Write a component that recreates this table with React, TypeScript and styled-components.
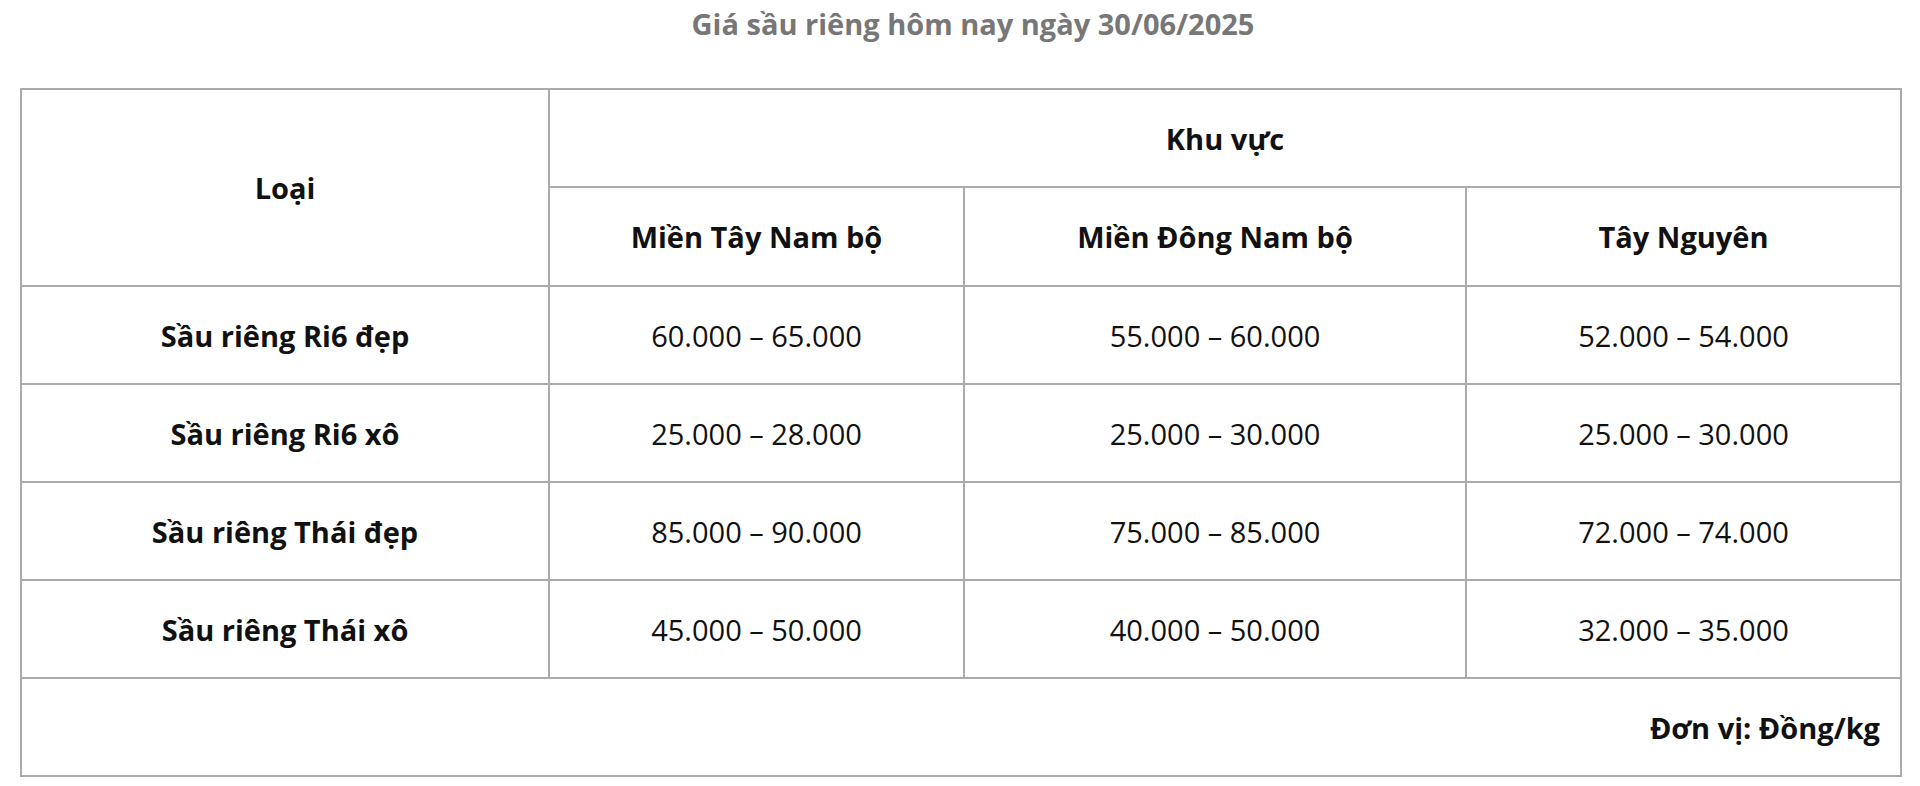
import React from "react";
import styled, { createGlobalStyle } from "styled-components";

const GlobalStyle = createGlobalStyle`
  html, body {
    margin: 0;
    padding: 0;
    background: #fff;
  }
  body {
    font-family: "Open Sans", "Noto Sans", "Liberation Sans", sans-serif;
    color: #111;
  }
`;

const Page = styled.div`
  padding: 4px 20px 0;
`;

const Title = styled.h2`
  margin: 0 0 44px;
  padding-left: 26px;
  text-align: center;
  font-size: 29px;
  line-height: 40px;
  font-weight: 700;
  color: #777;
`;

const PriceTable = styled.table`
  width: 100%;
  table-layout: fixed;
  border-collapse: collapse;
  border: 2px solid #ababab;
  font-size: 29px;
`;

const Row = styled.tr<{ $tall?: boolean }>`
  height: ${(p) => (p.$tall ? 99 : 98)}px;
`;

const Cell = styled.td<{ $bold?: boolean; $align?: "center" | "right" }>`
  border: 2px solid #ababab;
  padding: 0 20px;
  text-align: ${(p) => p.$align ?? "center"};
  vertical-align: middle;
  font-weight: ${(p) => (p.$bold ? 700 : 400)};
  color: #111;
  white-space: nowrap;
`;

const HeadCell = styled(Cell).attrs({ as: "th" })``;

type PriceRow = {
  name: string;
  prices: [string, string, string];
};

const rows: PriceRow[] = [
  { name: "Sầu riêng Ri6 đẹp", prices: ["60.000 – 65.000", "55.000 – 60.000", "52.000 – 54.000"] },
  { name: "Sầu riêng Ri6 xô", prices: ["25.000 – 28.000", "25.000 – 30.000", "25.000 – 30.000"] },
  { name: "Sầu riêng Thái đẹp", prices: ["85.000 – 90.000", "75.000 – 85.000", "72.000 – 74.000"] },
  { name: "Sầu riêng Thái xô", prices: ["45.000 – 50.000", "40.000 – 50.000", "32.000 – 35.000"] },
];

const regions = ["Miền Tây Nam bộ", "Miền Đông Nam bộ", "Tây Nguyên"];

export default function App() {
  return (
    <>
      <GlobalStyle />
      <Page>
        <Title>Giá sầu riêng hôm nay ngày 30/06/2025</Title>
        <PriceTable>
          <colgroup>
            <col style={{ width: 528 }} />
            <col style={{ width: 415 }} />
            <col style={{ width: 502 }} />
            <col style={{ width: 435 }} />
          </colgroup>
          <thead>
            <Row>
              <HeadCell $bold rowSpan={2}>
                Loại
              </HeadCell>
              <HeadCell $bold colSpan={3}>
                Khu vực
              </HeadCell>
            </Row>
            <Row $tall>
              {regions.map((r) => (
                <HeadCell $bold key={r}>
                  {r}
                </HeadCell>
              ))}
            </Row>
          </thead>
          <tbody>
            {rows.map((row) => (
              <Row key={row.name}>
                <Cell $bold>{row.name}</Cell>
                {row.prices.map((p, i) => (
                  <Cell key={i}>{p}</Cell>
                ))}
              </Row>
            ))}
            <Row>
              <Cell $bold $align="right" colSpan={4}>
                Đơn vị: Đồng/kg
              </Cell>
            </Row>
          </tbody>
        </PriceTable>
      </Page>
    </>
  );
}
